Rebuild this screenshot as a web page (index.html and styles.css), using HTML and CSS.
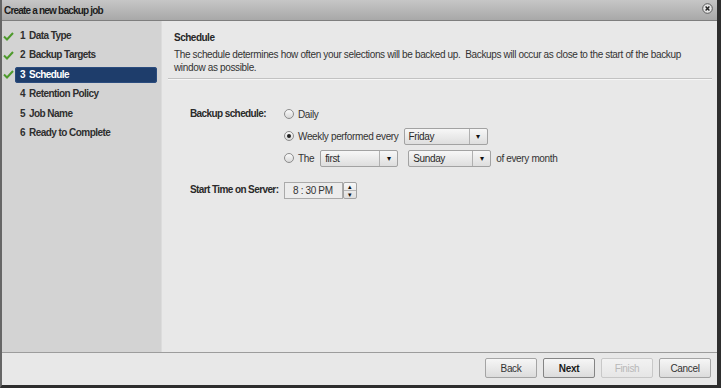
FILE: index.html
```html
<!DOCTYPE html>
<html lang="en">
<head>
<meta charset="UTF-8">
<title>Create a new backup job</title>
<link rel="stylesheet" href="styles.css">
</head>
<body>

<div class="window">

    <!-- Title bar -->
    <div class="titlebar">
        <span class="title">Create a new backup job</span>
        <svg class="close" width="11" height="11" viewBox="0 0 11 11">
            <circle cx="5.5" cy="5.5" r="4.8" fill="#e6e6e6" stroke="#5a5a5a" stroke-width="1"/>
            <path d="M3.6 3.6 L7.4 7.4 M7.4 3.6 L3.6 7.4" stroke="#222" stroke-width="1.4"/>
        </svg>
    </div>

    <div class="main">

        <!-- Wizard steps -->
        <ul class="steps">
            <li class="step"><span class="check"><svg width="11" height="9" viewBox="0 0 11 9"><path d="M1 4.5 L4 7.5 L10 1" fill="none" stroke="#4e9a2c" stroke-width="2"/></svg></span><span class="step-label"><span class="step-num">1</span>Data Type</span></li>
            <li class="step"><span class="check"><svg width="11" height="9" viewBox="0 0 11 9"><path d="M1 4.5 L4 7.5 L10 1" fill="none" stroke="#4e9a2c" stroke-width="2"/></svg></span><span class="step-label"><span class="step-num">2</span>Backup Targets</span></li>
            <li class="step"><span class="check"><svg width="11" height="9" viewBox="0 0 11 9"><path d="M1 4.5 L4 7.5 L10 1" fill="none" stroke="#4e9a2c" stroke-width="2"/></svg></span><span class="step-label active"><span class="step-num">3</span>Schedule</span></li>
            <li class="step"><span class="check"></span><span class="step-label"><span class="step-num">4</span>Retention Policy</span></li>
            <li class="step"><span class="check"></span><span class="step-label"><span class="step-num">5</span>Job Name</span></li>
            <li class="step"><span class="check"></span><span class="step-label"><span class="step-num">6</span>Ready to Complete</span></li>
        </ul>

        <!-- Schedule page -->
        <div class="content">
            <h3>Schedule</h3>
            <p class="desc">The schedule determines how often your selections will be backed up.&nbsp; Backups will occur as close to the start of the backup window as possible.</p>
            <div class="divider"></div>

            <div class="form">
                <div class="form-row">
                    <div class="form-label">Backup schedule:</div>
                    <div class="options">
                        <div class="option"><span class="radio"></span>Daily</div>
                        <div class="option"><span class="radio checked"></span>Weekly performed every
                            <div class="select select-day"><span class="select-text">Friday</span><span class="select-arrow">&#9662;</span></div>
                        </div>
                        <div class="option"><span class="radio"></span>The
                            <div class="select select-nth"><span class="select-text">first</span><span class="select-arrow">&#9662;</span></div>
                            <div class="select select-week"><span class="select-text">Sunday</span><span class="select-arrow">&#9662;</span></div>
                            <span class="suffix">of every month</span>
                        </div>
                    </div>
                </div>
                <div class="form-row time-row">
                    <div class="form-label">Start Time on Server:</div>
                    <div class="time-field">
                        <span class="time-text">8 : 30 PM</span>
                        <span class="spinner"><span class="spin up">&#9652;</span><span class="spin down">&#9662;</span></span>
                    </div>
                </div>
            </div>
        </div>

    </div>

    <!-- Buttons -->
    <div class="footer">
        <button class="btn">Back</button>
        <button class="btn btn-default">Next</button>
        <button class="btn" disabled>Finish</button>
        <button class="btn">Cancel</button>
    </div>

</div>

</body>
</html>
```

FILE: styles.css
```css
body { margin: 0; font-family: "Liberation Sans", Arial, sans-serif; font-size: 10px; letter-spacing: -0.35px; color: #333; background: #333; }

.window {
    width: 721px;
    height: 388px;
    box-sizing: border-box;
    border-left: 2px solid #666;
    border-right: 4px solid #2e2e2e;
    border-bottom: 3px solid #2e2e2e;
    background: #e8e8e8;
    display: flex;
    flex-direction: column;
}

.titlebar {
    height: 20px;
    border-bottom: 1px solid #7e7e7e;
    background: linear-gradient(#c6c6c6, #a8a8a8);
    display: flex;
    align-items: center;
    justify-content: space-between;
    padding: 0 4px 0 2px;
    flex-shrink: 0;
}
.title { font-weight: bold; color: #1c1c1c; letter-spacing: -0.8px; }
.close { margin-top: -3px; }

.main { display: flex; height: 331px; flex-shrink: 0; }

/* steps sidebar */
.steps {
    list-style: none;
    margin: 0;
    padding: 7px 4px 0 0;
    width: 160px;
    box-sizing: border-box;
    background: #d3d3d3;
    border-right: 1px solid #dcdcdc;
}
.step { display: flex; height: 16px; margin-bottom: 3.4px; }
.check { width: 13px; display: flex; align-items: center; padding-left: 1px; box-sizing: border-box; }
.step-label {
    flex: 1;
    line-height: 16px;
    padding-left: 5px;
    font-weight: bold;
    letter-spacing: -0.55px;
    color: #2e2e2e;
    border-radius: 3px;
}
.step-num { margin-right: 4px; }
.step-label.active { background: #1e3d6b; color: #fff; box-shadow: inset 0 0 0 1px #2b4c7e; }

/* page content */
.content { flex: 1; padding: 10px 0 0 12px; }
h3 { margin: 0; font-size: 10px; line-height: 14px; color: #262626; letter-spacing: -0.5px; }
.desc { margin: 3px 0 0; line-height: 13px; max-width: 525px; }
.divider {
    margin: 4px 5px 0 -6px;
    border-top: 1px solid #c2c2c2;
    border-bottom: 1px solid #f6f6f6;
}

.form { padding: 23px 0 0 16px; }
.form-row { display: flex; }
.form-label { width: 94px; font-weight: bold; letter-spacing: -0.6px; line-height: 22px; color: #2a2a2a; white-space: nowrap; }
.option { display: flex; align-items: center; height: 22px; white-space: nowrap; }
.radio {
    width: 10px;
    height: 10px;
    box-sizing: border-box;
    border: 1px solid #8c8c8c;
    border-radius: 50%;
    background: linear-gradient(#fafafa, #d8d8d8);
    margin-right: 4px;
    display: flex;
    justify-content: center;
    align-items: center;
}
.radio.checked::after { content: ""; width: 4px; height: 4px; border-radius: 50%; background: #222; }

.select {
    height: 17px;
    box-sizing: border-box;
    border: 1px solid #a2a2a2;
    border-radius: 2px;
    background: linear-gradient(#f7f7f7, #dedede);
    display: flex;
    margin-left: 5px;
}
.select-text { flex: 1; padding-left: 4px; line-height: 15px; color: #2a2a2a; }
.select-arrow {
    width: 17px;
    border-left: 1px solid #b0b0b0;
    text-align: center;
    font-size: 8px;
    line-height: 15px;
    color: #111;
}
.select-day { width: 84px; }
.select-nth { width: 78px; margin-left: 6px; }
.select-week { width: 83px; margin-left: 10px; }
.suffix { margin-left: 5px; }

.time-row { margin-top: 10px; align-items: center; }
.time-field { display: flex; height: 17px; }
.time-text {
    width: 59px;
    box-sizing: border-box;
    border: 1px solid #aaa;
    background: #ececec;
    padding-left: 8px;
    line-height: 15px;
}
.spinner {
    width: 14px;
    box-sizing: border-box;
    border: 1px solid #a2a2a2;
    border-radius: 2px;
    display: flex;
    flex-direction: column;
    background: linear-gradient(#f7f7f7, #dedede);
}
.spin { flex: 1; font-size: 7px; line-height: 7px; text-align: center; color: #111; }
.spin.down { border-top: 1px solid #b5b5b5; }

/* footer buttons */
.footer {
    flex: 1;
    border-top: 1px solid #9c9c9c;
    display: flex;
    justify-content: flex-end;
    align-items: flex-start;
    gap: 6px;
    padding: 5px 6px 0 0;
}
.btn {
    width: 52px;
    height: 20px;
    font-family: inherit;
    font-size: 10px;
    letter-spacing: inherit;
    color: #333;
    border: 1px solid #a4a4a4;
    border-radius: 2px;
    background: linear-gradient(#f6f6f6, #dcdcdc);
    padding: 0;
}
.btn-default { font-weight: bold; border-color: #848484; color: #1a1a1a; }
.btn:disabled { color: #b8b8b8; border-color: #c8c8c8; background: linear-gradient(#f2f2f2, #e6e6e6); }
```
